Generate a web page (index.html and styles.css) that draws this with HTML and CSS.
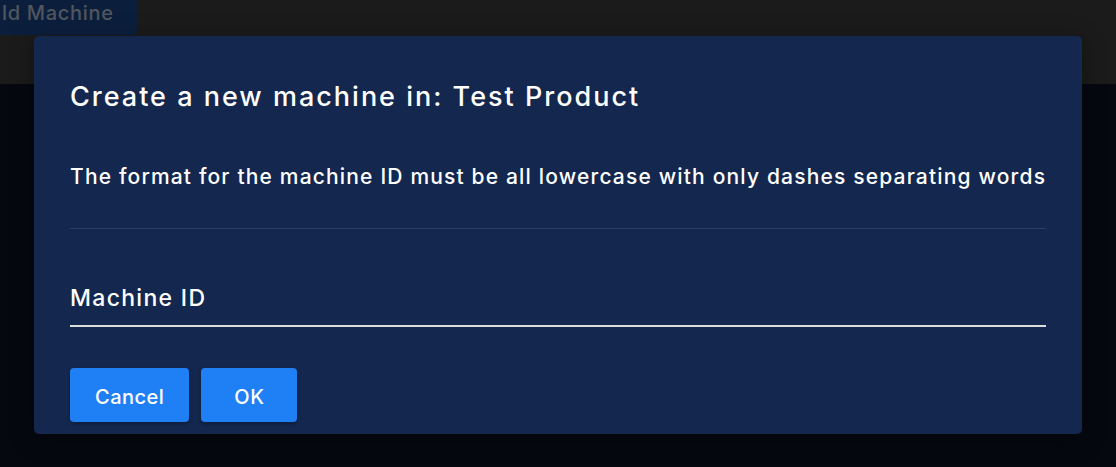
FILE: index.html
```html
<!DOCTYPE html>
<html lang="en">
<head>
<meta charset="utf-8">
<title>Create machine</title>
<link rel="stylesheet" href="styles.css">
</head>
<body>
<header class="topbar">
  <button class="build-btn">ld Machine</button>
</header>
<main class="page"></main>
<div class="modal" role="dialog">
  <h2 class="modal-title">Create a new machine in: Test Product</h2>
  <p class="modal-text">The format for the machine ID must be all lowercase with only dashes separating words</p>
  <hr class="modal-divider">
  <div class="field">
    <span class="field-label">Machine ID</span>
  </div>
  <div class="actions">
    <button class="btn btn-cancel">Cancel</button>
    <button class="btn btn-ok">OK</button>
  </div>
</div>
</body>
</html>
```
FILE: styles.css
```css
* { box-sizing: border-box; }
html, body {
  margin: 0;
  height: 100%;
}
body {
  background: #05080f;
  font-family: Inter, "Open Sans", sans-serif;
  color: #ffffff;
  overflow: hidden;
}
.topbar {
  height: 84px;
  background: #1b1b1b;
  display: flex;
  align-items: flex-start;
}
.build-btn {
  height: 35px;
  width: 137px;
  border: none;
  border-radius: 0 0 4px 0;
  background: #0b1f3d;
  color: #51565e;
  font-family: inherit;
  font-size: 20px;
  font-weight: 500;
  letter-spacing: 0.7px;
  padding: 0 0 10px 2px;
  text-align: left;
}
.modal {
  position: absolute;
  left: 34px;
  top: 36px;
  width: 1048px;
  height: 398px;
  background: #14284f;
  border-radius: 5px;
  padding: 45px 36px 12px 36px;
  box-shadow: 0 4px 24px rgba(0, 0, 0, 0.35);
}
.modal-title {
  margin: 0;
  font-size: 27px;
  line-height: 32px;
  font-weight: 500;
  letter-spacing: 2px;
}
.modal-text {
  margin: 52px 0 0 0;
  font-size: 21px;
  line-height: 24px;
  font-weight: 500;
  letter-spacing: 1.17px;
  white-space: nowrap;
}
.modal-divider {
  margin: 39px 0 0 0;
  border: none;
  height: 1px;
  background: #2b3e5e;
}
.field {
  margin-top: 56px;
  padding-bottom: 14px;
  border-bottom: 2px solid #dcdcdc;
}
.field-label {
  display: block;
  font-size: 23px;
  line-height: 26px;
  font-weight: 500;
  letter-spacing: 1.3px;
}
.actions {
  margin-top: 41px;
  display: flex;
  gap: 12px;
}
.btn {
  height: 54px;
  min-width: 96px;
  padding: 3px 25px 0 25px;
  border: none;
  border-radius: 4px;
  background: #1f80f5;
  color: #ffffff;
  font-family: inherit;
  font-size: 20px;
  font-weight: 500;
  letter-spacing: 0.5px;
  box-shadow: 0 2px 4px rgba(0, 0, 0, 0.3);
}
```
